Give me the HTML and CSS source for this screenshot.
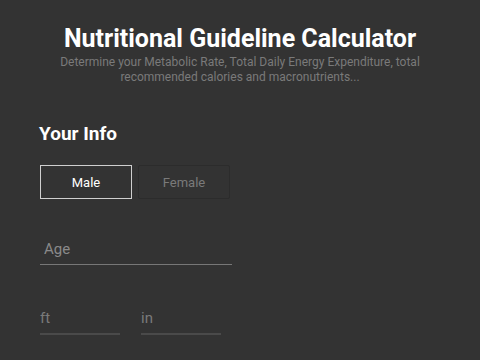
FILE: index.html
```html
<!DOCTYPE html>
<html lang="en">
<head>
    <meta charset="UTF-8">
    <meta name="viewport" content="width=device-width, initial-scale=1.0">
    <title>Nutritional Guideline Calculator</title>
    <link rel="stylesheet" href="styles.css">
</head>
<body>
    <header class="intro">
        <h1>Nutritional Guideline Calculator</h1>
        <p>Determine your Metabolic Rate, Total Daily Energy Expenditure, total recommended calories and macronutrients...</p>
    </header>

    <section class="info">
        <h2>Your Info</h2>

        <div class="gender">
            <button class="gender-btn active">Male</button>
            <button class="gender-btn">Female</button>
        </div>

        <div class="field age">
            <input type="text" placeholder="Age">
        </div>

        <div class="height-row">
            <div class="field small">
                <input type="text" placeholder="ft">
            </div>
            <div class="field small">
                <input type="text" placeholder="in">
            </div>
        </div>
    </section>
</body>
</html>
```

FILE: styles.css
```css
body { margin: 0; background-color: #333333; color: white; font-family: Roboto, "Liberation Sans", Arial, sans-serif; }
.intro { text-align: center; padding: 25px 50px 0; }
.intro h1 { margin: 0; font-size: 25px; line-height: 28px; font-weight: 700; }
.intro p { margin: 2px 0 0; font-size: 12px; line-height: 15px; color: #7a7a7a; }
.info { padding: 0 40px; margin-top: 38px; }
.info h2 { margin: 0 0 0 -1px; font-size: 19px; line-height: 22px; font-weight: 700; }
.gender { display: flex; gap: 6px; margin-top: 20px; }
.gender-btn { width: 92px; height: 34px; background: transparent; border: 1px solid #2c2c2c; border-radius: 2px; color: #7a7a7a; font-family: inherit; font-size: 13px; padding: 0; }
.gender-btn.active { border-color: #cfcfcf; color: white; border-radius: 0; }
.field input { display: block; width: 100%; box-sizing: border-box; background: transparent; border: none; outline: none; color: white; font-family: inherit; padding: 0; }
.field input::placeholder { color: #8a8a8a; }
.age { width: 192px; margin-top: 37px; }
.age input { height: 29px; padding: 0 4px 2px; font-size: 15px; border-bottom: 1px solid #777; }
.height-row { display: flex; gap: 21px; margin-top: 41px; }
.small { width: 80px; }
.small input { height: 29px; padding-bottom: 4px; font-size: 15px; border-bottom: 2px solid #4a4a4a; }
.small input::placeholder { color: #7a7a7a; }
```
